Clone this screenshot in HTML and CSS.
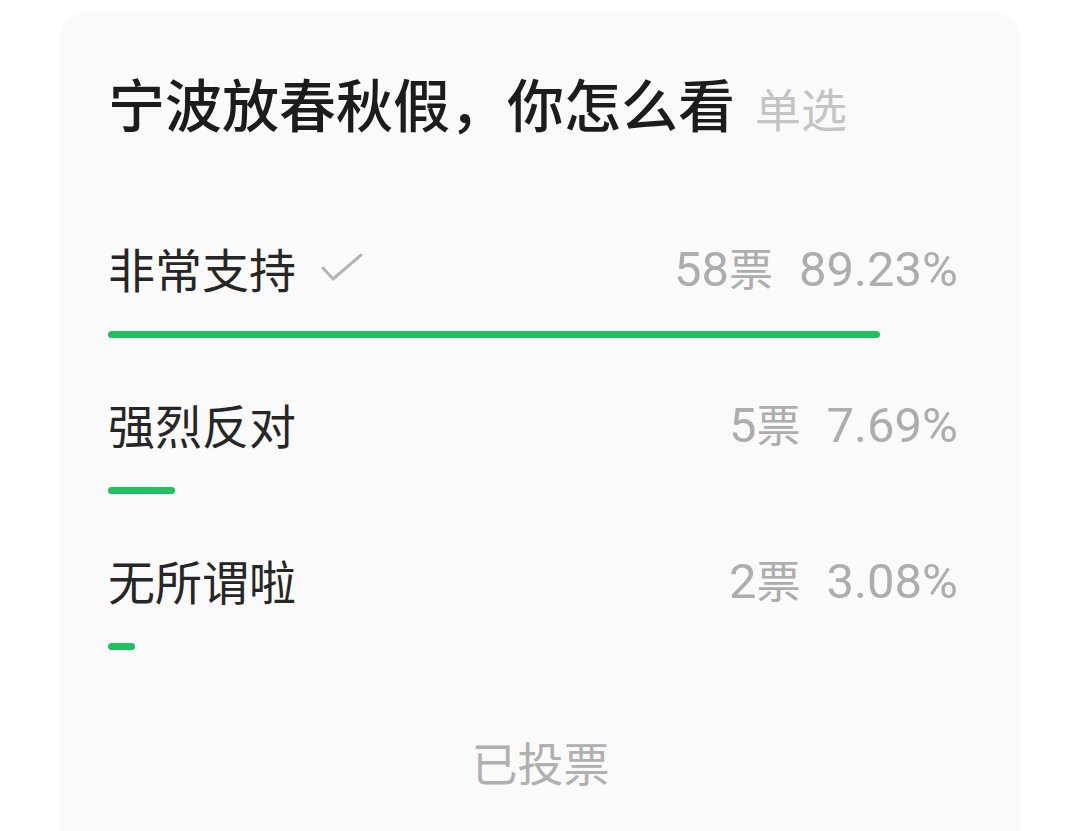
FILE: index.html
```html
<!DOCTYPE html>
<html lang="zh-CN">
<head>
<meta charset="UTF-8" />
<meta name="viewport" content="width=device-width, initial-scale=1" />
<title>投票</title>
<link rel="stylesheet" href="styles.css">
</head>
<body>

<div class="card">
  <div class="title-row">
    <h2 class="title">宁波放春秋假，你怎么看</h2>
    <span class="type">单选</span>
  </div>

  <div class="options">
    <div class="option">
      <div class="option-head">
        <div class="label">
          非常支持
          <svg class="check" width="42" height="32" viewBox="0 0 42 32">
            <path d="M2 16 L12 27 L40 3" fill="none" stroke="#b4b4b4" stroke-width="3" stroke-linecap="round" stroke-linejoin="round" />
          </svg>
        </div>
        <div class="stats"><span>58<span class="unit">票</span></span><span>89.23%</span></div>
      </div>
      <div class="track"><div class="fill" style="width:89.23%"></div></div>
    </div>

    <div class="option">
      <div class="option-head">
        <div class="label">强烈反对</div>
        <div class="stats"><span>5<span class="unit">票</span></span><span>7.69%</span></div>
      </div>
      <div class="track"><div class="fill" style="width:7.69%"></div></div>
    </div>

    <div class="option">
      <div class="option-head">
        <div class="label">无所谓啦</div>
        <div class="stats"><span>2<span class="unit">票</span></span><span>3.08%</span></div>
      </div>
      <div class="track"><div class="fill" style="width:3.08%"></div></div>
    </div>
  </div>

  <div class="voted">已投票</div>
</div>

</body>
</html>
```

FILE: styles.css
```css
body {
  margin: 0;
  padding: 0;
  background: #ffffff;
  font-family: "Noto Sans CJK SC", "Noto Sans", sans-serif;
  color: #222;
}
.card {
  margin: 12px 59px 0 59px;
  min-height: 819px;
  box-sizing: border-box;
  padding: 57px 48px 0 49px;
  background: #fafafa;
  border-radius: 26px 26px 0 0;
}
.title-row {
  display: flex;
  align-items: baseline;
  height: 67px;
}
.title {
  margin: 0;
  font-size: 57px;
  line-height: 67px;
  font-weight: 500;
  color: #1c1c1c;
}
.type {
  margin-left: 20px;
  font-size: 46px;
  color: #c4c4c4;
}
.options {
  display: flex;
  flex-direction: column;
  gap: 55px;
  margin-top: 101px;
}
.option-head {
  display: flex;
  justify-content: space-between;
  align-items: center;
  height: 60px;
}
.label {
  display: flex;
  align-items: center;
  font-size: 47px;
  color: #262626;
}
.check {
  margin-left: 25px;
  margin-top: 2px;
}
.stats {
  display: flex;
  align-items: baseline;
  gap: 26px;
  padding-right: 15px;
  font-family: Roboto, "Noto Sans CJK SC", sans-serif;
  font-size: 49px;
  color: #adadad;
}
.unit {
  font-family: "Noto Sans CJK SC", sans-serif;
  font-size: 44px;
}
.track {
  margin-top: 34px;
  height: 7px;
}
.fill {
  height: 100%;
  background: #20c05f;
  border-radius: 4px;
}
.voted {
  margin-top: 81px;
  height: 60px;
  line-height: 60px;
  text-align: center;
  font-size: 46px;
  color: #b0b0b0;
}
```
